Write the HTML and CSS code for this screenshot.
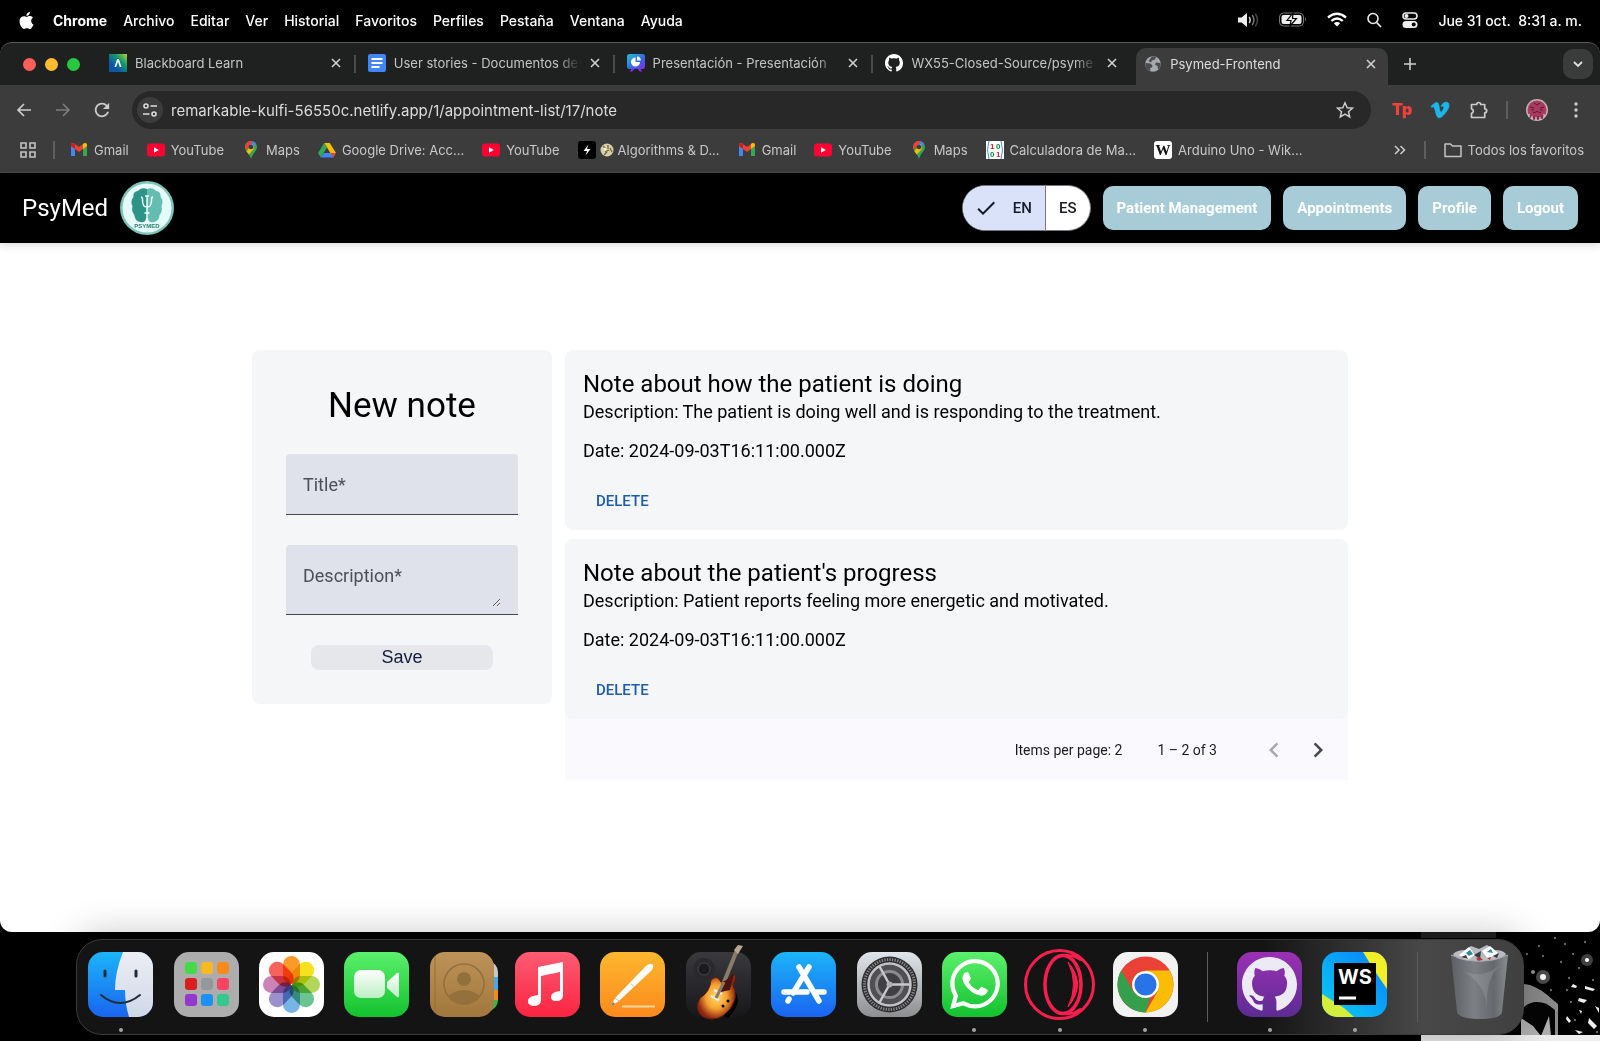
FILE: index.html
```html
<!DOCTYPE html>
<html lang="es">
<head>
<meta charset="utf-8">
<title>Psymed-Frontend</title>
<link rel="stylesheet" href="styles.css">
</head>
<body>
<svg class="defs" width="0" height="0" aria-hidden="true">
  <defs>
    <symbol id="close" viewBox="0 0 12 12"><path d="M2 2l8 8M10 2l-8 8" fill="none" stroke="currentColor" stroke-width="1.6"/></symbol>
    <symbol id="gmail" viewBox="0 0 18 18"><path d="M1 15V4.500L5 7.500V15z" fill="#4285f4"/><path d="M13 15V7.500l4-3V15z" fill="#34a853"/><path d="M1 5V4c0-2 2-2.500 3.300-1.500L9 6l4.700-3.500C15 1.500 17 2 17 4v1L9 11z" fill="#ea4335"/><path d="M13 8V3c2-1.700 4-.7 4 1v1z" fill="#fbbc04"/><path d="M1 5V4c0-2 2.500-2.500 4-1v5z" fill="#c5221f"/></symbol>
    <symbol id="youtube" viewBox="0 0 18 18"><rect y="2.500" width="18" height="13" rx="3" fill="#ff0033"/><path d="M7 6.300v5.400L11.800 9z" fill="#fff"/></symbol>
    <symbol id="maps" viewBox="0 0 18 18"><path d="M9 0a6 6 0 0 0-6 6c0 4 4.500 6 6 12 1.500-6 6-8 6-12a6 6 0 0 0-6-6z" fill="#34a853"/><path d="M4.300 2.200A6 6 0 0 1 11 .4L5 8.500 3.500 7.800A6 6 0 0 1 4.300 2.200z" fill="#ea4335"/><path d="M11 .4a6 6 0 0 1 3.200 2.700L9 9 7 5z" fill="#4285f4"/><path d="M4.300 10.300L11 3l.8 5-5 5.500c-.8-1.200-1.800-2.200-2.500-3.200z" fill="#fbbc04"/><circle cx="9" cy="6" r="2.300" fill="#3c3c3c"/></symbol>
    <symbol id="github" viewBox="0 0 16 16"><path fill="currentColor" d="M8 0C3.580 0 0 3.580 0 8c0 3.540 2.290 6.530 5.470 7.590.4.070.55-.17.55-.38 0-.19-.01-.82-.01-1.490-2.010.37-2.530-.49-2.690-.94-.09-.23-.48-.94-.82-1.130-.28-.15-.68-.52-.01-.53.63-.01 1.080.58 1.230.82.72 1.210 1.870.87 2.330.66.070-.52.28-.87.51-1.070-1.780-.2-3.640-.89-3.640-3.950 0-.87.31-1.590.82-2.150-.08-.2-.36-1.020.080-2.120 0 0 .67-.21 2.200.82.64-.18 1.320-.27 2-.27.68 0 1.360.090 2 .27 1.530-1.040 2.200-.82 2.200-.82.44 1.100.16 1.920.080 2.120.51.56.82 1.270.82 2.150 0 3.070-1.870 3.750-3.650 3.950.29.25.54.73.54 1.480 0 1.070-.01 1.930-.01 2.200 0 .21.15.46.55.38A8.013 8.013 0 0 0 16 8c0-4.420-3.580-8-8-8z"/></symbol>
    <linearGradient id="gBlue" x2="0" y2="1"><stop stop-color="#1cb5f8"/><stop offset="1" stop-color="#1a64f0"/></linearGradient>
    <linearGradient id="gGreen" x2="0" y2="1"><stop stop-color="#5cf06c"/><stop offset="1" stop-color="#12c22e"/></linearGradient>
    <linearGradient id="gGrey" x2="0" y2="1"><stop stop-color="#dfe6ec"/><stop offset="1" stop-color="#8e8e90"/></linearGradient>
    <linearGradient id="gPaper" x2="0" y2="1"><stop stop-color="#eceef4"/><stop offset="1" stop-color="#d0d8e8"/></linearGradient>
    <linearGradient id="gPink" x2="0" y2="1"><stop stop-color="#fc5c74"/><stop offset="1" stop-color="#fb2440"/></linearGradient>
    <linearGradient id="gOrange" x2="0" y2="1"><stop stop-color="#fdb72f"/><stop offset="1" stop-color="#fb8a1c"/></linearGradient>
    <linearGradient id="gBrown" x2="0" y2="1"><stop stop-color="#bd935a"/><stop offset="1" stop-color="#a1773c"/></linearGradient>
    <linearGradient id="gPurple" x2="0" y2="1"><stop stop-color="#9b30b4"/><stop offset="1" stop-color="#5c2c92"/></linearGradient>
    <linearGradient id="gDark" x2="0" y2="1"><stop stop-color="#3a3a3e"/><stop offset="1" stop-color="#17171a"/></linearGradient>
    <linearGradient id="gCam" x2="0" y2="1"><stop stop-color="#fff"/><stop offset="1" stop-color="#bdeec4"/></linearGradient>
    <linearGradient id="gBin"><stop stop-color="#5c6064"/><stop offset=".4" stop-color="#7c8084"/><stop offset=".75" stop-color="#65696d"/><stop offset="1" stop-color="#888c90"/></linearGradient>
    <linearGradient id="gBb" x1="1" x2="0" y2="1"><stop stop-color="#b5d334"/><stop offset=".35" stop-color="#149a6a"/><stop offset=".7" stop-color="#0c56a8"/></linearGradient>
    <linearGradient id="gPres" x2="1" y2="1"><stop stop-color="#1cc4d0"/><stop offset=".6" stop-color="#3a62e8"/><stop offset="1" stop-color="#8a2be2"/></linearGradient>
    <linearGradient id="gWs" y1="1" x2="1" y2="0"><stop stop-color="#0ad0f0"/><stop offset="1" stop-color="#0a7cff"/></linearGradient>
    <radialGradient id="gGuitar"><stop stop-color="#ffe070"/><stop offset=".55" stop-color="#f5a030"/><stop offset="1" stop-color="#8c2410"/></radialGradient>
    <clipPath id="tile"><rect width="65" height="65" rx="15"/></clipPath>
  </defs>
</svg>

<header class="menubar">
  <svg class="apple" viewBox="0 0 24 24" aria-hidden="true"><path fill="#fff" d="M12.152 6.896c-.948 0-2.415-1.078-3.960-1.040-2.040.027-3.910 1.183-4.961 3.014-2.117 3.675-.546 9.103 1.519 12.090 1.013 1.454 2.208 3.090 3.792 3.039 1.520-.065 2.090-.987 3.935-.987 1.831 0 2.350.987 3.960.948 1.637-.026 2.676-1.480 3.676-2.948 1.156-1.688 1.636-3.325 1.662-3.415-.039-.013-3.182-1.221-3.220-4.857-.026-3.040 2.480-4.494 2.597-4.559-1.429-2.090-3.623-2.324-4.390-2.376-2-.156-3.675 1.090-4.610 1.090zM15.530 3.830c.843-1.012 1.400-2.427 1.245-3.830-1.207.052-2.662.805-3.532 1.818-.78.896-1.454 2.338-1.273 3.714 1.338.104 2.715-.688 3.559-1.701"/></svg>
  <nav class="menus"><strong>Chrome</strong><span>Archivo</span><span>Editar</span><span>Ver</span><span>Historial</span><span>Favoritos</span><span>Perfiles</span><span>Pestaña</span><span>Ventana</span><span>Ayuda</span></nav>
  <div class="status">
    <svg width="22" height="18" viewBox="0 0 22 18" aria-hidden="true"><path d="M1 6.500h3.500L10 2v14l-5.500-4.500H1z" fill="#eee"/><g fill="none" stroke-width="1.500" stroke-linecap="round"><path d="M12.500 6.500q1.500 2.500 0 5" stroke="#ccc"/><path d="M15.500 4.500q3 4.500 0 9" stroke="#777"/><path d="M18.500 3q4 6 0 12" stroke="#444"/></g></svg>
    <svg width="28" height="16" viewBox="0 0 28 16" aria-hidden="true"><rect x=".5" y="1" width="24" height="13" rx="4" fill="none" stroke="#777"/><rect x="2.500" y="3" width="20" height="9" rx="2" fill="#eee"/><path d="M26 5.500q2 2 0 4z" fill="#777"/><path d="M14 1L8 8.500h4L11 14l6.500-7.500h-4z" fill="#eee" stroke="#000" stroke-width="1.200"/></svg>
    <svg width="20" height="16" viewBox="0 0 20 16" aria-hidden="true"><g fill="none" stroke="#fff" stroke-width="2.300"><path d="M1 5.500q9-7.500 18 0"/><path d="M4.300 9q5.700-5 11.400 0"/></g><path d="M10 14.500L6.800 11.300q3.200-2.600 6.400 0z" fill="#fff"/></svg>
    <svg width="15" height="16" viewBox="0 0 15 16" aria-hidden="true"><circle cx="6" cy="6.500" r="5" fill="none" stroke="#eee" stroke-width="1.600"/><path d="M9.700 10.500L14 15" stroke="#eee" stroke-width="1.800"/></svg>
    <svg width="16" height="16" viewBox="0 0 16 16" aria-hidden="true"><rect x="1" y="1" width="14" height="6" rx="3" fill="none" stroke="#eee" stroke-width="1.500"/><circle cx="4.500" cy="4" r="2" fill="#eee"/><rect x=".5" y="9" width="15" height="7" rx="3.500" fill="#eee"/><circle cx="11.700" cy="12.500" r="2" fill="#000"/></svg>
    <time>Jue 31 oct.&nbsp; 8:31 a. m.</time>
  </div>
</header>

<div class="window">
  <div class="tabstrip">
    <div class="lights"><i class="red"></i><i class="yellow"></i><i class="green"></i></div>
    <div class="tabs">
      <div class="tab">
        <svg class="fav" viewBox="0 0 18 18" aria-hidden="true"><rect width="18" height="18" fill="url(#gBb)"/><path d="M5.500 13L8.200 5h1.600l2.700 8h-1.700L9 7.500 7.200 13z" fill="#fff"/></svg>
        <span class="tab-title">Blackboard Learn</span><button class="x" aria-label="Cerrar"><svg><use href="#close"/></svg></button>
      </div>
      <div class="tab">
        <svg class="fav" viewBox="0 0 18 18" aria-hidden="true"><rect width="18" height="18" rx="2" fill="#4285f4"/><path d="M3.500 5h11M3.500 9h11M3.500 13h8" stroke="#fff" stroke-width="2"/></svg>
        <span class="tab-title">User stories - Documentos de</span><button class="x" aria-label="Cerrar"><svg><use href="#close"/></svg></button>
      </div>
      <div class="tab">
        <svg class="fav" viewBox="0 0 18 18" aria-hidden="true"><path d="M5 13l-2 5 3-1 2-4zM13 13l2 5-3-1-2-4z" fill="#8a2be2"/><rect width="18" height="15" rx="2.500" fill="url(#gPres)"/><path d="M8.500 3.500V8H13a4.500 4.500 0 1 1-4.500-4.500z" fill="#fff"/><path d="M10 2.500A4 4 0 0 1 13.800 6.500H10z" fill="#fff"/></svg>
        <span class="tab-title">Presentación - Presentación</span><button class="x" aria-label="Cerrar"><svg><use href="#close"/></svg></button>
      </div>
      <div class="tab last">
        <svg class="fav white" aria-hidden="true"><use href="#github"/></svg>
        <span class="tab-title">WX55-Closed-Source/psyme</span><button class="x" aria-label="Cerrar"><svg><use href="#close"/></svg></button>
      </div>
      <div class="tab active">
        <svg class="fav" viewBox="0 0 18 18" aria-hidden="true"><circle cx="9" cy="9" r="7.800" fill="#a5a8ad"/><path d="M1.500 8l5 .5 2 2-.5 2-2 .5.500 3C3 15 1 12 1.500 8zM8 1.500l4 .5-1 2.500-3 1-1 2L4.500 6zM16.500 8L12 7.500l-1 2 2.500 1.500.500 3.500C16.500 12.500 17 10 16.500 8z" fill="#4a4c50"/></svg>
        <span class="tab-title">Psymed-Frontend</span><button class="x" aria-label="Cerrar"><svg><use href="#close"/></svg></button>
      </div>
    </div>
    <button class="newtab" aria-label="Nueva pestaña"><svg width="14" height="14" viewBox="0 0 14 14"><path d="M7 1v12M1 7h12" stroke="#d0d0d0" stroke-width="1.600"/></svg></button>
    <button class="tabsearch" aria-label="Buscar pestañas"><svg width="12" height="8" viewBox="0 0 12 8"><path d="M2 2l4 4 4-4" fill="none" stroke="#e0e0e0" stroke-width="1.800"/></svg></button>
  </div>

  <div class="toolbar">
    <button class="tool" aria-label="Atrás"><svg viewBox="0 0 18 18"><path d="M16 9H3M9 3L3 9l6 6" fill="none" stroke="#ccc" stroke-width="1.700"/></svg></button>
    <button class="tool" aria-label="Adelante"><svg viewBox="0 0 18 18"><path d="M2 9h13M9 3l6 6-6 6" fill="none" stroke="#7c7c7c" stroke-width="1.700"/></svg></button>
    <button class="tool" aria-label="Recargar"><svg viewBox="2 2 20 20"><path fill="#ccc" d="M17.650 6.350C16.200 4.900 14.210 4 12 4c-4.420 0-7.990 3.580-7.990 8s3.570 8 7.990 8c3.730 0 6.840-2.550 7.730-6h-2.080c-.82 2.330-3.040 4-5.650 4-3.310 0-6-2.690-6-6s2.690-6 6-6c1.660 0 3.140.69 4.220 1.780L13 11h7V4l-2.350 2.350z"/></svg></button>
    <div class="omnibox">
      <button class="site" aria-label="Información del sitio"><svg width="16" height="16" viewBox="0 0 16 16"><g fill="none" stroke="#ddd" stroke-width="1.600"><circle cx="4" cy="4" r="2"/><path d="M8.500 4H15M1 12h6.500"/><circle cx="12" cy="12" r="2"/></g></svg></button>
      <input type="text" class="url" aria-label="Dirección" value="remarkable-kulfi-56550c.netlify.app/1/appointment-list/17/note">
      <button class="star" aria-label="Favorito"><svg width="18" height="18" viewBox="0 0 18 18"><path d="M9 1.800l2.200 4.900 5.300.5-4 3.500 1.200 5.200L9 13.200l-4.700 2.700 1.200-5.200-4-3.500 5.300-.5z" fill="none" stroke="#ccc" stroke-width="1.500"/></svg></button>
    </div>
    <div class="extensions">
      <button class="tool" aria-label="Toptal"><svg viewBox="0 0 18 18"><text class="tp" x="0" y="14">Tp</text></svg></button>
      <button class="tool" aria-label="Vimeo"><svg viewBox="0 0 24 24"><path fill="#1ab7ea" stroke="#1ab7ea" d="M23.977 6.416c-.105 2.338-1.739 5.543-4.894 9.609-3.268 4.247-6.026 6.370-8.290 6.370-1.409 0-2.578-1.294-3.553-3.881L5.322 11.400C4.603 8.816 3.834 7.522 3.010 7.522c-.179 0-.806.378-1.881 1.132L0 7.197a315.065 315.065 0 0 0 3.501-3.128C5.080 2.701 6.266 1.984 7.055 1.910c1.867-.18 3.016 1.100 3.447 3.838.465 2.953.789 4.789.971 5.507.539 2.450 1.131 3.674 1.776 3.674.502 0 1.256-.796 2.265-2.385 1.004-1.589 1.540-2.797 1.612-3.628.144-1.371-.395-2.061-1.614-2.061-.574 0-1.167.121-1.777.391 1.186-3.868 3.434-5.757 6.762-5.637 2.473.060 3.628 1.664 3.493 4.797z"/></svg></button>
      <button class="tool" aria-label="Extensiones"><svg viewBox="0 0 18 18"><path d="M1.500 3.500h5.200a2 2 0 0 1 4 0h4v4.300a2 2 0 0 1 0 4v4.700H1.500v-4.200a2.300 2.300 0 0 0 0-4.500z" fill="none" stroke="#ccc" stroke-width="1.700" stroke-linejoin="round"/></svg></button>
      <i class="bar"></i>
      <svg class="avatar" viewBox="0 0 22 22" aria-hidden="true"><circle cx="11" cy="11" r="11" fill="#c4aeb2"/><circle cx="11" cy="11" r="9.500" fill="#a83c60"/><path d="M4 8l4 1M14 9l4-1M7 14q4-3 8 0M5 11h3M14 11h3M8 4l3 2 3-2M4 16v3M8 17v4M12 17v4M16 16v4" stroke="#5c1834" fill="none"/><path d="M3 15v3M6 17v3M10 18v3M14 18v3M18 15v3" stroke="#ead8dc"/></svg>
      <button class="tool" aria-label="Menú"><svg viewBox="0 0 18 18"><g fill="#ccc"><circle cx="9" cy="3" r="1.700"/><circle cx="9" cy="9" r="1.700"/><circle cx="9" cy="15" r="1.700"/></g></svg></button>
    </div>
  </div>

  <div class="bookmarks">
    <svg class="apps" viewBox="0 0 16 16" aria-hidden="true"><path d="M1 1h5v5H1zM10 1h5v5h-5zM1 10h5v5H1zM10 10h5v5h-5z" fill="none" stroke="#c4c4c4" stroke-width="1.600"/></svg>
    <i class="bar"></i>
    <nav class="marks">
      <a href="#"><svg><use href="#gmail"/></svg>Gmail</a>
      <a href="#"><svg><use href="#youtube"/></svg>YouTube</a>
      <a href="#"><svg><use href="#maps"/></svg>Maps</a>
      <a href="#"><svg viewBox="0 0 18 18"><path d="M6.200 2h5.600L18 12h-5.600z" fill="#fbbc04"/><path d="M6.200 2L0 12l2.800 4.500L9 6.500z" fill="#34a853"/><path d="M5.600 12H18l-2.800 4.500H2.800z" fill="#4285f4"/><path d="M18 12l-2.800 4.500L12.400 12z" fill="#ea4335"/></svg>Google Drive: Acc...</a>
      <a href="#"><svg><use href="#youtube"/></svg>YouTube</a>
      <a href="#" class="tight"><svg viewBox="0 0 18 18"><rect width="18" height="18" rx="3" fill="#000"/><path d="M10.500 3.500L5.500 10H9l-1.500 4.500L12.500 8H9z" fill="#fff"/></svg><svg class="coin" viewBox="0 0 14 14"><circle cx="7" cy="7" r="6.500" fill="#d9cfa0"/><path d="M3 3l3 3M8 2v4M5 9l4-2M10 5l2 4M4 12l3-3" stroke="#6c6650" stroke-width="1.300"/><circle cx="5" cy="6" r="1.500" fill="#fff"/></svg>Algorithms &amp; D...</a>
      <a href="#"><svg><use href="#gmail"/></svg>Gmail</a>
      <a href="#"><svg><use href="#youtube"/></svg>YouTube</a>
      <a href="#"><svg><use href="#maps"/></svg>Maps</a>
      <a href="#"><svg viewBox="0 0 18 18"><rect width="18" height="18" fill="#fff"/><path d="M3 0Q0 9 3 18M15 0q3 9 0 18" stroke="#4a90d0" fill="none"/><g class="matrix"><text x="4" y="8" fill="#d22">1</text><text x="10" y="8" fill="#184">0</text><text x="4" y="16" fill="#184">0</text><text x="10" y="16" fill="#d22">1</text></g></svg>Calculadora de Ma...</a>
      <a href="#"><svg viewBox="0 0 18 18"><rect width="18" height="18" rx="3" fill="#fff"/><text class="wiki" x="9" y="14" text-anchor="middle">W</text></svg>Arduino Uno - Wik...</a>
    </nav>
    <div class="marks-end">
      <svg width="12" height="12" viewBox="0 0 12 12" aria-hidden="true"><path d="M1 2l4 4-4 4M6.500 2l4 4-4 4" fill="none" stroke="#ccc" stroke-width="1.500"/></svg>
      <i class="bar"></i>
      <a href="#"><svg viewBox="0 0 18 18"><path d="M1 3h5.500l2 2H17v10.500H1z" fill="none" stroke="#c4c4c4" stroke-width="1.500" stroke-linejoin="round"/></svg>Todos los favoritos</a>
    </div>
  </div>

  <div class="page">
    <header class="appbar">
      <span class="brand">PsyMed</span>
      <svg class="logo" viewBox="0 0 54 54" role="img" aria-label="PsyMed"><circle cx="27" cy="27" r="27" fill="#7cc4b8"/><circle cx="27" cy="27" r="24.500" fill="#e4fbf8"/><path d="M27 8c-4-2-8 0-9 2-4 0-5 4-4.500 6-3 3-2 7-1 9-1 4 0 7 2 9 0 4 3 7 6 7 3 1 5-1 6.500-3z" fill="#2f9488"/><path d="M27 8c4-2 8 0 9 2 4 0 5 4 4.500 6 3 3 2 7 1 9 1 4 0 7-2 9 0 4-3 7-6 7-3 1-5-1-6.500-3z" fill="#64bdb0"/><path d="M21 16q1.500 0 1.500 3c0 5 1 7 4.500 7s4.500-2 4.500-7q0-3 1.500-3M27 15v24M25 15h4M24.500 32h5" fill="none" stroke="#f0fffc" stroke-width="1.500"/><path d="M26 37h2l1 5h-4z" fill="#f0fffc"/><text class="logo-text" x="27" y="47" text-anchor="middle">PSYMED</text></svg>
      <nav class="actions">
        <div class="lang" role="group" aria-label="Language">
          <button class="on" aria-pressed="true"><svg width="24" height="24" viewBox="0 0 24 24"><path d="M9 16.170L4.830 12l-1.420 1.410L9 19 21 7l-1.410-1.410z" fill="currentColor"/></svg>EN</button><button aria-pressed="false">ES</button>
        </div>
        <button class="nav-btn">Patient Management</button>
        <button class="nav-btn">Appointments</button>
        <button class="nav-btn">Profile</button>
        <button class="nav-btn">Logout</button>
      </nav>
    </header>
    <main class="content">
      <form class="new-note">
        <h1>New note</h1>
        <div class="field"><label for="title">Title*</label><input id="title" type="text"></div>
        <div class="field area"><label for="desc">Description*</label><textarea id="desc" rows="1"></textarea></div>
        <button class="save" type="button">Save</button>
      </form>
      <section class="notes">
        <article class="note">
          <h2>Note about how the patient is doing</h2>
          <p>Description: The patient is doing well and is responding to the treatment.</p>
          <p class="date">Date: 2024-09-03T16:11:00.000Z</p>
          <button class="delete">DELETE</button>
        </article>
        <article class="note">
          <h2>Note about the patient's progress</h2>
          <p>Description: Patient reports feeling more energetic and motivated.</p>
          <p class="date">Date: 2024-09-03T16:11:00.000Z</p>
          <button class="delete">DELETE</button>
        </article>
        <div class="paginator">
          <span>Items per page: 2</span>
          <span class="range">1 – 2 of 3</span>
          <button disabled aria-label="Previous page"><svg width="30" height="30" viewBox="0 0 24 24"><path d="M15.410 7.410L14 6l-6 6 6 6 1.410-1.410L10.830 12z" fill="#a9a9ad"/></svg></button>
          <button aria-label="Next page"><svg width="30" height="30" viewBox="0 0 24 24"><path d="M10 6L8.590 7.410 13.170 12l-4.580 4.590L10 18l6-6z" fill="#44474e"/></svg></button>
        </div>
      </section>
    </main>
  </div>
</div>

<footer class="desktop">
  <svg class="wallpaper" viewBox="0 0 179 109" aria-hidden="true">
    <rect width="179" height="109" fill="#000"/><path d="M0 0h75v6H0z" fill="#222"/>
    <path d="M100 52q14-1 32 16l5 4v32h-37z" fill="#8c8c8c"/><path d="M100 78q10-12 26-6l8 6v26h-34z" fill="#050505"/><path d="M100 86l12 8 8 10h-20zM128 84l2 20h-10z" fill="#b0b0b0"/>
    <g fill="#fff"><circle cx="122" cy="45" r="7" opacity=".3"/><circle cx="122" cy="45" r="3"/><circle cx="166" cy="28" r="6" opacity=".25"/><circle cx="166" cy="28" r="2"/><circle cx="112" cy="40" r="2" opacity=".6"/></g>
    <g fill="#eee"><path d="M152 52l4 2-1 2-5-1zM158 66l8 2-3 3-6-2zM164 54l10 3-2 2-8-2zM146 84l4 5-2 2-3-4zM158 78l3 1-1 3zM168 86l8 8-3 3-6-6zM154 98l8 2-4 2zM174 74l4 2v5z"/></g>
    <g fill="#888"><circle cx="106" cy="22" r="1"/><circle cx="118" cy="14" r="1"/><circle cx="122" cy="24" r="1"/><circle cx="144" cy="12" r="1"/><circle cx="134" cy="6" r="1"/><circle cx="152" cy="22" r="1"/><circle cx="158" cy="36" r="1"/><circle cx="148" cy="46" r="1"/><circle cx="172" cy="48" r="1"/><circle cx="164" cy="10" r="1"/><circle cx="140" cy="30" r="1"/><circle cx="150" cy="70" r="1"/><circle cx="154" cy="88" r="1"/><circle cx="176" cy="100" r="1"/><circle cx="146" cy="58" r="1"/><circle cx="130" cy="58" r="1"/></g>
    <path d="M0 103h179v6H0z" fill="#eee"/>
  </svg>
  <div class="dock">
    <div class="apps-main">
      <div class="app run"><svg viewBox="0 0 65 65"><g clip-path="url(#tile)"><rect width="65" height="65" fill="url(#gBlue)"/><path d="M35 0Q27 20 27 38h10q0 14 4 27h24V0z" fill="url(#gPaper)"/></g><path d="M17 19v5M48 19v5" stroke="#222c38" stroke-width="3" stroke-linecap="round"/><path d="M13 43q19 16 39 0" fill="none" stroke="#222c38" stroke-width="2" stroke-linecap="round"/></svg></div>
      <div class="app"><svg viewBox="0 0 65 65"><rect width="65" height="65" rx="15" fill="#adadad"/><g><rect x="11" y="10" width="12" height="12" rx="3" fill="#45d94c"/><rect x="27" y="10" width="12" height="12" rx="3" fill="#fcb820"/><rect x="43" y="10" width="12" height="12" rx="3" fill="#fa8a1c"/><rect x="11" y="26" width="12" height="12" rx="3" fill="#d81e1e"/><rect x="27" y="26" width="12" height="12" rx="3" fill="#94989e"/><rect x="43" y="26" width="12" height="12" rx="3" fill="#fb4464"/><rect x="11" y="42" width="12" height="12" rx="3" fill="#9438cc"/><rect x="27" y="42" width="12" height="12" rx="3" fill="#1a90f8"/><rect x="43" y="42" width="12" height="12" rx="3" fill="#34c890"/></g></svg></div>
      <div class="app"><svg viewBox="0 0 65 65"><rect width="65" height="65" rx="15" fill="#fff"/><g class="petals"><rect x="24" y="4" width="17" height="28" rx="8.500" fill="#fb9a28"/><rect x="24" y="4" width="17" height="28" rx="8.500" fill="#f4e21c" transform="rotate(45 32.500 32.500)"/><rect x="24" y="4" width="17" height="28" rx="8.500" fill="#b4d658" transform="rotate(90 32.500 32.500)"/><rect x="24" y="4" width="17" height="28" rx="8.500" fill="#6cc490" transform="rotate(135 32.500 32.500)"/><rect x="24" y="4" width="17" height="28" rx="8.500" fill="#78b4e4" transform="rotate(180 32.500 32.500)"/><rect x="24" y="4" width="17" height="28" rx="8.500" fill="#9a90cc" transform="rotate(225 32.500 32.500)"/><rect x="24" y="4" width="17" height="28" rx="8.500" fill="#cc84b8" transform="rotate(270 32.500 32.500)"/><rect x="24" y="4" width="17" height="28" rx="8.500" fill="#f8625c" transform="rotate(315 32.500 32.500)"/></g></svg></div>
      <div class="app"><svg viewBox="0 0 65 65"><rect width="65" height="65" rx="15" fill="url(#gGreen)"/><rect x="10" y="18" width="31" height="28" rx="7" fill="url(#gCam)"/><path d="M43 30l10-9q2-1 2 1v22q0 2-2 1l-10-9z" fill="url(#gCam)"/></svg></div>
      <div class="app"><svg viewBox="0 0 65 65"><path d="M58 8q10 4 10 12v8H58z" fill="#c8c8c8"/><path d="M58 25h10v13H58z" fill="#4aa8e8"/><path d="M58 38h10v10H58z" fill="#f08c20"/><path d="M58 48h10q0 8-10 12z" fill="#34b848"/><rect width="64" height="65" rx="15" fill="url(#gBrown)"/><path d="M5 4v57" stroke="#946c34"/><circle cx="34" cy="32" r="20" fill="none" stroke="#94703c" stroke-width="1.500"/><circle cx="34" cy="27" r="7" fill="#94703c"/><path d="M18 44q16-12 32 0-6 8-16 8t-16-8z" fill="#94703c"/></svg></div>
      <div class="app"><svg viewBox="0 0 65 65"><rect width="65" height="65" rx="15" fill="url(#gPink)"/><path d="M23 15l25-5v33q0 6-7 6-5 0-5-4 0-5 9-6V20l-19 4v24q0 6-8 6-6-1-5-6 1-4 10-5z" fill="#fff"/></svg></div>
      <div class="app"><svg viewBox="0 0 65 65"><rect width="65" height="65" rx="15" fill="url(#gOrange)"/><path d="M22 54.500h33" stroke="#ffd8a0" stroke-width="2"/><path d="M11 54l4-8 31-32q5-4 7-1 1 2-2 6L19 49z" fill="#fff"/><path d="M31 32l4 3M15 46l4 3" stroke="#b8b8b8"/><path d="M11 54l2-4 2 2z" fill="#777"/></svg></div>
      <div class="app"><svg viewBox="0 0 65 65"><rect width="65" height="65" rx="15" fill="url(#gDark)"/><circle cx="18" cy="17" r="11" fill="#2a2a2e"/><circle cx="18" cy="17" r="6" fill="#1c1c20" stroke="#444"/><path d="M48 38q10 12-6 28l-8-4z" fill="#000"/><path d="M51-2L34 40" stroke="#8a7c6c" stroke-width="4"/><path d="M48-2l4-5 5 1-5 8z" fill="#b8a890"/><path d="M25 28q6-6 10 2 8 0 14-8 2 4-2 11 6 12-3 24-12 15-27 8-10-8-3-19 10-6 11-18z" fill="url(#gGuitar)" stroke="#5c1a10"/><path d="M35 32l13-10-4 16-9 2z" fill="#4a1410"/><path d="M28 38l8 4M25 44l8 4" stroke="#eee" stroke-width="2"/><circle cx="37" cy="54" r="1.500"/><circle cx="42" cy="49" r="1.500"/><path d="M38 30l-8 16" stroke="#8a7c6c" stroke-width="3"/></svg></div>
      <div class="app"><svg viewBox="0 0 65 65"><rect width="65" height="65" rx="15" fill="url(#gBlue)"/><g stroke="#fff" stroke-width="5.500" stroke-linecap="round"><path d="M38 15L22 41M28 15l20 34M13 40h23M46 40h7M18 47l-1 2"/></g></svg></div>
      <div class="app"><svg viewBox="0 0 65 65"><rect width="65" height="65" rx="15" fill="url(#gGrey)"/><circle cx="32.500" cy="32.500" r="28" fill="#2e2e30"/><circle cx="32.500" cy="32.500" r="25" fill="none" stroke="#8a8a8c" stroke-width="3" stroke-dasharray="1.300 1.300"/><circle cx="32.500" cy="32.500" r="21" fill="#505052" stroke="#c4c4c8" stroke-width="2.500"/><circle cx="32.500" cy="32.500" r="13" fill="#404042" stroke="#8c8c8e" stroke-width="3"/><path d="M32.500 32.500H53M32.500 32.500l-10-18M32.500 32.500l-10 18" stroke="#c8c8cc" stroke-width="2.500"/><circle cx="32.500" cy="32.500" r="3" fill="#b0b0b4"/></svg></div>
      <div class="app run"><svg viewBox="0 0 65 65"><rect width="65" height="65" rx="15" fill="url(#gGreen)"/><g transform="translate(8 7) scale(2.080)"><path fill="#fff" d="M17.472 14.382c-.297-.149-1.758-.867-2.030-.967-.273-.099-.471-.148-.67.15-.197.297-.767.966-.94 1.164-.173.199-.347.223-.644.075-.297-.15-1.255-.463-2.390-1.475-.883-.788-1.480-1.761-1.653-2.059-.173-.297-.018-.458.13-.606.134-.133.298-.347.446-.52.149-.174.198-.298.298-.497.099-.198.050-.371-.025-.52-.075-.149-.669-1.612-.916-2.207-.242-.579-.487-.5-.669-.51-.173-.008-.371-.010-.57-.010-.198 0-.52.074-.792.372-.272.297-1.040 1.016-1.040 2.479 0 1.462 1.065 2.875 1.213 3.074.149.198 2.096 3.200 5.077 4.487.709.306 1.262.489 1.694.625.712.227 1.360.195 1.871.118.571-.085 1.758-.719 2.006-1.413.248-.694.248-1.289.173-1.413-.074-.124-.272-.198-.57-.347m-5.421 7.403h-.004a9.870 9.870 0 0 1-5.031-1.378l-.361-.214-3.741.982.998-3.648-.235-.374a9.860 9.860 0 0 1-1.510-5.260c.001-5.450 4.436-9.884 9.888-9.884 2.640 0 5.122 1.030 6.988 2.898a9.825 9.825 0 0 1 2.893 6.994c-.003 5.450-4.437 9.884-9.885 9.884m8.413-18.297A11.815 11.815 0 0 0 12.050 0C5.495 0 .16 5.335.157 11.892c0 2.096.547 4.142 1.588 5.945L.057 24l6.305-1.654a11.882 11.882 0 0 0 5.683 1.448h.005c6.554 0 11.890-5.335 11.893-11.893a11.821 11.821 0 0 0-3.480-8.413z"/></g></svg></div>
      <div class="app run"><svg viewBox="0 0 65 65"><g fill="none" stroke="#fa1e4e"><circle cx="32.500" cy="32.500" r="34" stroke-width="3"/><ellipse cx="36" cy="32.500" rx="18" ry="29" stroke-width="3.500"/></g><path d="M36 2q13-1 20 6l-3 1Q45 3 36 5zM36 63q13 1 20-6l-3-1q-8 6-17 4z" fill="#fa1e4e"/><path d="M41 10q19 22 0 45 11-23 0-45z" fill="#fa1e4e" stroke="#fa1e4e"/></svg></div>
      <div class="app run"><svg viewBox="0 0 65 65"><rect width="65" height="65" rx="15" fill="#f2f2f2"/><circle cx="32.500" cy="32.500" r="28" fill="#ea4335"/><path d="M32.500 18.500h24.200a28 28 0 0 1-24.200 42l12-21z" fill="#fbbc04"/><path d="M8.200 18.500l12.200 21q7 8 17 6l-5 15A28 28 0 0 1 8.200 18.500z" fill="#34a04c"/><circle cx="32.500" cy="32.500" r="13.500" fill="#fff"/><circle cx="32.500" cy="32.500" r="11" fill="#2a72e8"/></svg></div>
    </div>
    <i class="sep"></i>
    <div class="apps-recent">
      <div class="app run"><svg viewBox="0 0 65 65"><rect width="65" height="65" rx="15" fill="url(#gPurple)"/><svg class="cat" x="5" y="5" width="55" height="55"><use href="#github"/></svg></svg></div>
      <div class="app run"><svg viewBox="0 0 65 65"><g clip-path="url(#tile)"><rect width="65" height="65" fill="url(#gWs)"/><path d="M41 0h24v37L52 18z" fill="#f2ee28"/><path d="M0 42l22 14 10 9H0z" fill="#d4ee3c"/></g><rect x="12" y="11" width="42" height="42"/><text class="ws" x="16" y="32">WS</text><path d="M17 46h17" stroke="#fff" stroke-width="3"/></svg></div>
    </div>
    <i class="sep"></i>
    <div class="trash">
      <div class="app"><svg viewBox="0 0 65 65"><path d="M4 3q28 10 57 0l-6 57q-1 7-22 7t-23-7z" fill="url(#gBin)"/><path d="M6 2q4-4 12-4l6-4 8 3 8-4 8 5q8 0 11 4-4 7-27 7T6 2z" fill="#b8bcc0"/><path d="M12 3l10-8 6 8-8 5zM35-1l8-5 8 7-10 6z" fill="#fff"/><path d="M19 1l4-3 3 4-4 2zM40 0l4-3 2 4z" fill="#2c8c98"/><path d="M27 3l7-4-1 8zM14 5l5-2 2 4zM46 4l6-3-2 5z" fill="#383c40"/><path d="M29 6l4-1 3 3-5 1zM40 6l4-1-1 3z" fill="#a83c3c"/><path d="M4 3q28 13 57 0" fill="none" stroke="#a8acb0"/><path d="M14 18q20 10 38-4-14 14-12 42-2-26-26-38z" fill="#b4b8bc" opacity=".25"/></svg></div>
    </div>
  </div>
</footer>
</body>
</html>
```

FILE: styles.css
```css
* { box-sizing: border-box; }
body {
  margin: 0;
  min-height: 100vh;
  display: flex;
  flex-direction: column;
  background: #000;
  color: #fff;
  font-family: Inter, "Liberation Sans", sans-serif;
  font-size: 13px;
}
button { font: inherit; border: 0; padding: 0; background: none; color: inherit; cursor: pointer; }
svg { display: block; flex: none; overflow: visible; }
a { color: inherit; text-decoration: none; }
.defs { position: absolute; }

/* macOS menu bar */
.menubar { height: 42px; display: flex; align-items: center; padding: 0 18px 2px; }
.apple { width: 17px; height: 17px; margin-right: 18px; }
.menus { display: flex; gap: 16px; font-size: 14px; font-weight: 500; }
.menus strong { font-weight: 700; }
.status { margin-left: auto; display: flex; align-items: center; gap: 20px; font-size: 14px; font-weight: 500; }

/* browser window */
.window {
  flex: 1;
  display: flex;
  flex-direction: column;
  border-radius: 12px;
  overflow: hidden;
  background: #3c3c3c;
}
.tabstrip {
  height: 43px;
  display: flex;
  align-items: center;
  background: #1f2121;
  border-top: 1px solid #5a5c5c;
  border-radius: 12px 12px 0 0;
  padding-right: 7px;
}
.lights { display: flex; gap: 9px; padding-left: 23px; width: 97px; flex: none; }
.lights i { width: 13px; height: 13px; border-radius: 50%; }
.red { background: #ff5f57; }
.yellow { background: #febc2e; }
.green { background: #28c840; }
.tabs { display: flex; align-self: stretch; flex: 0 1 1295px; min-width: 0; }
.tab {
  flex: 1;
  min-width: 0;
  display: flex;
  align-items: center;
  gap: 8px;
  padding: 0 11px 2px 12px;
  color: #c4c6c6;
  background: linear-gradient(#4a4c4c, #4a4c4c) right center / 2px 18px no-repeat;
}
.tab.last { background: none; }
.tab.active {
  margin: 5px 4px 0 4px;
  padding: 0 8px 6px 8px;
  background: #3c3c3c;
  color: #dedede;
  border-radius: 10px 10px 0 0;
}
.fav { width: 18px; height: 18px; }
.white { color: #fff; }
.tab-title {
  flex: 1;
  min-width: 0;
  margin-right: -6px;
  overflow: hidden;
  white-space: nowrap;
  mask-image: linear-gradient(to right, #000 86%, transparent 98%);
}
.x { width: 18px; height: 18px; display: grid; place-items: center; color: #d0d0d0; }
.x svg { width: 12px; height: 12px; }
.newtab { width: 30px; height: 30px; display: grid; place-items: center; margin-left: 3px; }
.tabsearch { width: 30px; height: 30px; display: grid; place-items: center; margin-left: auto; background: #3a3c3c; border-radius: 10px; }

.toolbar { height: 50px; display: flex; align-items: center; padding: 0 15px; }
.tool { width: 18px; height: 18px; margin-right: 21px; flex: none; }
.tool svg { width: 18px; height: 18px; }
.omnibox {
  flex: 1;
  height: 38px;
  display: flex;
  align-items: center;
  background: #282828;
  border-radius: 19px;
  padding: 0 17px 0 5px;
}
.site { width: 26px; height: 26px; border-radius: 50%; background: #3c3c3c; display: grid; place-items: center; }
.url { flex: 1; min-width: 0; border: 0; outline: 0; background: none; color: #dcdcdc; font: inherit; font-size: 15px; padding: 0 8px; }
.extensions { display: flex; align-items: center; margin-left: 21px; }
.bar { width: 2px; height: 18px; background: #5e5e5e; flex: none; }
.avatar { width: 22px; height: 22px; margin: 0 19px 0 18px; }
.tp { font: 900 16px Inter, sans-serif; fill: #f0403c; }
.extensions .tool:nth-child(3) { margin-right: 18px; }
.extensions .tool:last-child { margin: 0; }

.bookmarks { height: 38px; display: flex; align-items: center; padding: 0 16px 7px 20px; color: #c8c8c8; border-bottom: 1px solid #484848; }
.apps { width: 16px; height: 16px; margin-right: 17px; }
.marks { display: flex; gap: 18px; padding-left: 15px; white-space: nowrap; min-width: 0; overflow: hidden; }
.marks a, .marks-end a { display: flex; align-items: center; gap: 6px; }
.marks .tight { gap: 4px; }
.marks svg, .marks-end a svg { width: 18px; height: 18px; }
.marks .coin { width: 14px; height: 14px; }
.marks-end { margin-left: auto; display: flex; align-items: center; gap: 18px; }
.matrix { font: 700 8px "Liberation Sans", sans-serif; }
.wiki { font: 700 15px "Liberation Serif", serif; fill: #111; }

/* PsyMed application */
.page { flex: 1; background: #fff; color: #000; font-family: Roboto, sans-serif; }
.appbar {
  height: 70px;
  display: flex;
  align-items: center;
  gap: 12px;
  padding: 0 22px;
  background: #000;
  color: #fff;
  box-shadow: 0 2px 8px rgba(0, 0, 0, .16);
}
.brand { font-size: 24px; }
.logo { width: 54px; height: 54px; }
.logo-text { font: 700 6px "Liberation Sans", sans-serif; fill: #2a7c74; }
.actions { margin-left: auto; display: flex; align-items: center; gap: 12px; }
.lang { display: flex; height: 46px; border: 1px solid #74777f; border-radius: 23px; overflow: hidden; background: #fff; font-size: 15px; font-weight: 500; color: #1a1b1f; }
.lang button { padding: 0 13px; display: flex; align-items: center; gap: 15px; }
.lang .on { background: #dae2f9; color: #141b2c; border-right: 1px solid #74777f; padding-left: 11px; }
.nav-btn { height: 44px; padding: 0 14px; border-radius: 10px; background: #a8ccd7; color: #fff; font-size: 15px; font-weight: 700; }

.content { max-width: 1136px; margin: 0 auto; padding: 107px 20px 40px; display: flex; align-items: flex-start; gap: 13px; }
.new-note {
  flex: 0 0 300px;
  display: flex;
  flex-direction: column;
  gap: 30px;
  padding: 34px;
  background: #f5f6f8;
  border-radius: 8px;
}
.new-note h1 { margin: 0 0 -4px; font-size: 35px; line-height: 44px; font-weight: 400; text-align: center; }
.field { display: grid; height: 61px; background: #dfe2eb; border-bottom: 1px solid #44474e; border-radius: 4px 4px 0 0; padding: 0 17px; color: #4c4f57; font-size: 18px; }
.field > * { grid-area: 1 / 1; }
.field label { line-height: 62px; pointer-events: none; }
.field input, .field textarea { width: 100%; min-width: 0; border: 0; outline: 0; padding: 0; background: none; font: inherit; color: #000; }
.area { height: 70px; padding-bottom: 7px; }
.area textarea { height: 62px; padding-top: 20px; resize: vertical; }
.save { align-self: center; width: 182px; height: 25px; border-radius: 8px; background: #e5e7eb; color: #141b3c; font-family: "Liberation Sans", sans-serif; font-size: 18px; line-height: 25px; }

.notes { flex: 1; min-width: 0; }
.note { position: relative; padding: 19px 18px 9px; background: #f5f6f8; border-radius: 8px; }
.note + .note { margin-top: 9px; }
.note h2 { margin: 0; font-size: 24px; line-height: 30px; font-weight: 400; }
.note p { margin: 0; font-size: 18px; line-height: 26px; }
.note .date { margin: 13px 0 17px; }
.delete { height: 40px; padding: 0 13px; color: #1d5cad; font-size: 15px; font-weight: 500; display: block; }
.paginator { height: 69px; margin-top: -8px; padding: 8px 15px 0 0; display: flex; align-items: center; justify-content: flex-end; background: #faf9fd; font-size: 14px; color: #1a1b1f; }
.paginator .range { margin: 0 28px 0 35px; }
.paginator button { margin-left: 14px; }

/* desktop and dock */
.desktop { position: relative; padding: 7px 76px 6px; }
.wallpaper { position: absolute; right: 0; top: 0; width: 179px; height: 109px; }
.dock {
  position: relative;
  height: 96px;
  display: flex;
  align-items: center;
  padding: 0 1px;
  border: 1px solid #3a3a3a;
  border-radius: 26px;
  background: linear-gradient(to right, #141414 82%, #484848 93%, #404040);
  box-shadow: 0 0 40px rgba(0, 0, 0, .3);
}
.apps-main, .apps-recent, .trash { display: flex; min-width: 0; height: 100%; }
.apps-main { flex: 13; }
.apps-recent { flex: 2; }
.trash { flex: 1; }
.app { flex: 1; position: relative; display: grid; place-items: center; padding-bottom: 6px; }
.app > svg { width: 65px; height: 65px; }
.run::after { content: ""; position: absolute; bottom: 2px; left: calc(50% - 2px); width: 4px; height: 4px; border-radius: 50%; background: #a4a4a4; }
.sep { width: 1px; height: 70px; margin: 0 19px; background: #5c5c5c; }
.petals rect { mix-blend-mode: multiply; }
.cat { color: #eceaf4; }
.ws { font: 700 20px Inter, sans-serif; fill: #fff; }
```
